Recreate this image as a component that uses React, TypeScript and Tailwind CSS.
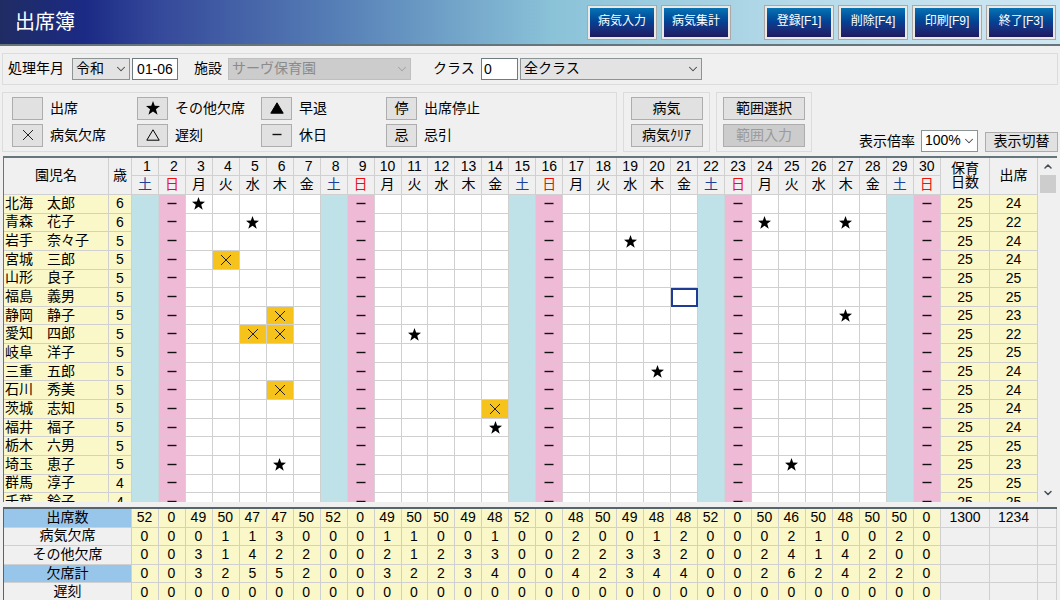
import type { ReactNode } from "react";
import { ChevronDown, ChevronUp } from "lucide-react";
import { clsx } from "clsx";

type Mark = "star" | "cross";

interface Child {
  name: string;
  age: number;
  attended: number;
  marks?: Record<number, Mark>;
}

const CHILDREN: Child[] = [
  { name: "北海　太郎", age: 6, attended: 24, marks: { 3: "star" } },
  { name: "青森　花子", age: 6, attended: 22, marks: { 5: "star", 24: "star", 27: "star" } },
  { name: "岩手　奈々子", age: 5, attended: 24, marks: { 19: "star" } },
  { name: "宮城　三郎", age: 5, attended: 24, marks: { 4: "cross" } },
  { name: "山形　良子", age: 5, attended: 25 },
  { name: "福島　義男", age: 5, attended: 25 },
  { name: "静岡　静子", age: 5, attended: 23, marks: { 6: "cross", 27: "star" } },
  { name: "愛知　四郎", age: 5, attended: 22, marks: { 5: "cross", 6: "cross", 11: "star" } },
  { name: "岐阜　洋子", age: 5, attended: 25 },
  { name: "三重　五郎", age: 5, attended: 24, marks: { 20: "star" } },
  { name: "石川　秀美", age: 5, attended: 24, marks: { 6: "cross" } },
  { name: "茨城　志知", age: 5, attended: 24, marks: { 14: "cross" } },
  { name: "福井　福子", age: 5, attended: 24, marks: { 14: "star" } },
  { name: "栃木　六男", age: 5, attended: 25 },
  { name: "埼玉　恵子", age: 5, attended: 23, marks: { 6: "star", 25: "star" } },
  { name: "群馬　淳子", age: 4, attended: 25 },
  { name: "千葉　鈴子", age: 4, attended: 25 },
];

const TOTALS = [
  {
    label: "出席数",
    strong: true,
    values: [52, 0, 49, 50, 47, 47, 50, 52, 0, 49, 50, 50, 49, 48, 52, 0, 48, 50, 49, 48, 48, 52, 0, 50, 46, 50, 48, 50, 50, 0],
    sums: ["1300", "1234"],
  },
  {
    label: "病気欠席",
    values: [0, 0, 0, 1, 1, 3, 0, 0, 0, 1, 1, 0, 0, 1, 0, 0, 2, 0, 0, 1, 2, 0, 0, 0, 2, 1, 0, 0, 2, 0],
  },
  {
    label: "その他欠席",
    values: [0, 0, 3, 1, 4, 2, 2, 0, 0, 2, 1, 2, 3, 3, 0, 0, 2, 2, 3, 3, 2, 0, 0, 2, 4, 1, 4, 2, 0, 0],
  },
  {
    label: "欠席計",
    strong: true,
    values: [0, 0, 3, 2, 5, 5, 2, 0, 0, 3, 2, 2, 3, 4, 0, 0, 4, 2, 3, 4, 4, 0, 0, 2, 6, 2, 4, 2, 2, 0],
  },
  { label: "遅刻", values: Array<number>(30).fill(0) },
];

const DAYS = Array.from({ length: 30 }, (_, i) => i + 1);
const WEEKDAYS = ["土", "日", "月", "火", "水", "木", "金"];
const SELECTED = { row: 5, day: 21 };

const weekday = (day: number) => WEEKDAYS[(day - 1) % 7];

const LINE = "border-r border-b border-[#d0d0d0]";
const CELL = `${LINE} p-0 pb-0.5 font-normal`;
const NUM = `${LINE} p-0 pb-px text-center font-normal`;

function Star({ className = "size-[13px]" }: { className?: string }) {
  return (
    <svg viewBox="0 0 12 12" className={clsx("mx-auto block", className)} aria-label="その他欠席">
      <path d="M6 0 7.5 4.1 12 4.3 8.5 7.1 9.9 11.8 6 9.1 2.1 11.8 3.5 7.1 0 4.3 4.5 4.1Z" fill="#000" />
    </svg>
  );
}

function Cross() {
  return (
    <svg viewBox="0 0 12 12" className="mx-auto block size-3" aria-label="病気欠席">
      <path d="M1 1 11 11M11 1 1 11" stroke="#222" strokeWidth="1" fill="none" />
    </svg>
  );
}

function Dash() {
  return (
    <svg viewBox="0 0 12 12" className="mx-auto block size-3" aria-label="休日">
      <path d="M1.5 5.5H10.5" stroke="#111" strokeWidth="1.4" fill="none" />
    </svg>
  );
}

function Triangle({ filled = false }: { filled?: boolean }) {
  return (
    <svg viewBox="0 0 14 12" className="mx-auto block h-3 w-3.5">
      <path d="M7 .8 13.2 11.2H.8Z" fill={filled ? "#000" : "none"} stroke="#000" strokeWidth="1" />
    </svg>
  );
}

const LEGEND: { label: string; icon: ReactNode }[] = [
  { label: "出席", icon: null },
  { label: "その他欠席", icon: <Star className="size-3.5" /> },
  { label: "早退", icon: <Triangle filled /> },
  { label: "出席停止", icon: "停" },
  { label: "病気欠席", icon: <Cross /> },
  { label: "遅刻", icon: <Triangle /> },
  { label: "休日", icon: <Dash /> },
  { label: "忌引", icon: "忌" },
];

function HeaderButton({ children }: { children: ReactNode }) {
  return (
    <button
      type="button"
      className="h-[35px] w-[70px] border border-[#a9a9a9] bg-[#ece9e4] p-[2px] text-[12px] text-white"
    >
      <span className="flex h-full items-center justify-center bg-linear-to-b from-[#0873b4] via-[#053f91] to-[#1c1a60] pb-0.5 whitespace-nowrap">
        {children}
      </span>
    </button>
  );
}

function GrayButton({ children, className, disabled }: { children: ReactNode; className?: string; disabled?: boolean }) {
  return (
    <button
      type="button"
      disabled={disabled}
      className={clsx(
        "flex items-center justify-center border border-[#adadad] pb-0.5 leading-none whitespace-nowrap",
        disabled ? "bg-[#cccccc] text-[#9b9b9b]" : "bg-[#e1e1e1]",
        className,
      )}
    >
      {children}
    </button>
  );
}

function Select({ label, value, className, disabled }: { label: string; value: string; className?: string; disabled?: boolean }) {
  return (
    <span className={clsx("grid h-[22px] items-center", className)}>
      <select
        aria-label={label}
        disabled={disabled}
        defaultValue={value}
        className={clsx(
          "col-start-1 row-start-1 h-full w-full appearance-none border pb-0.5 pl-[3px] leading-none",
          disabled ? "border-[#bfbfbf] text-[#8b8b8b]" : "border-[#8d9496]",
        )}
      >
        <option>{value}</option>
      </select>
      <ChevronDown
        strokeWidth={1.75}
        className={clsx(
          "pointer-events-none col-start-1 row-start-1 mr-0.5 size-3.5 justify-self-end",
          disabled ? "text-[#a5a5a5]" : "text-[#444]",
        )}
      />
    </span>
  );
}

function DayCell({ row, day, mark }: { row: number; day: number; mark?: Mark }) {
  const wd = weekday(day);
  return (
    <td
      className={clsx(
        "border-r border-b p-0",
        wd === "土" && "border-[#bee2e8] border-r-[#c8d8da] bg-[#bee2e8]",
        wd === "日" && "border-[#e6bfd4] border-r-[#d8d0d4] bg-[#efbad6]",
        wd !== "土" && wd !== "日" && "border-[#d0d0d0]",
        mark === "cross" && "bg-[#f5c31c]",
        row === SELECTED.row && day === SELECTED.day && "outline-2 -outline-offset-2 outline-[#1f3c94]",
      )}
    >
      {wd === "日" && <Dash />}
      {mark === "star" && <Star />}
      {mark === "cross" && <Cross />}
    </td>
  );
}

function AttendanceTable() {
  return (
    <table className="h-[354px] w-full table-fixed border-separate border-spacing-0 leading-none">
      <colgroup>
        <col className="w-[105px]" />
        <col className="w-[23px]" />
        {DAYS.map((d) => (
          <col key={d} />
        ))}
        <col className="w-[49px]" />
        <col className="w-[48px]" />
      </colgroup>
      <thead className="bg-[#f0f0f0]">
        <tr className="h-[18px]">
          <th rowSpan={2} className={CELL}>園児名</th>
          <th rowSpan={2} className={CELL}>歳</th>
          {DAYS.map((d) => (
            <th key={d} className={clsx(NUM, "h-[18px]", d < 10 && "pl-1")}>
              {d}
            </th>
          ))}
          <th rowSpan={2} className={CELL}>
            保育
            <br />
            日数
          </th>
          <th rowSpan={2} className={CELL}>出席</th>
        </tr>
        <tr className="h-[19px]">
          {DAYS.map((d) => (
            <th
              key={d}
              className={clsx(
                CELL,
                "h-[19px]",
                weekday(d) === "土" && "text-[#1d3f9c]",
                weekday(d) === "日" && "text-[#f01010]",
              )}
            >
              {weekday(d)}
            </th>
          ))}
        </tr>
      </thead>
      <tbody>
        {CHILDREN.map((child, row) => (
          <tr key={child.name}>
            <td className={clsx(CELL, "bg-[#faf7c8] pl-px whitespace-nowrap")}>{child.name}</td>
            <td className={clsx(NUM, "bg-[#faf7c8]")}>{child.age}</td>
            {DAYS.map((d) => (
              <DayCell key={d} row={row} day={d} mark={child.marks?.[d]} />
            ))}
            <td className={clsx(NUM, "bg-[#faf7c8]")}>25</td>
            <td className={clsx(NUM, "bg-[#faf7c8]")}>{child.attended}</td>
          </tr>
        ))}
      </tbody>
    </table>
  );
}

function TotalsTable() {
  return (
    <table className="h-[93px] w-full table-fixed border-separate border-spacing-0 bg-[#f0f0f0] leading-none">
      <colgroup>
        <col className="w-[128px]" />
        {DAYS.map((d) => (
          <col key={d} />
        ))}
        <col className="w-[49px]" />
        <col className="w-[48px]" />
        <col className="w-[19px]" />
      </colgroup>
      <tbody>
        {TOTALS.map((row) => (
          <tr key={row.label}>
            <th className={clsx(CELL, row.strong && "bg-[#98c5ea]")}>{row.label}</th>
            {row.values.map((v, i) => (
              <td key={i} className={clsx(NUM, "bg-[#faf7c8] pr-px")}>
                {v}
              </td>
            ))}
            <td className={NUM}>{row.sums?.[0]}</td>
            <td className={NUM}>{row.sums?.[1]}</td>
            <td className={CELL} />
          </tr>
        ))}
      </tbody>
    </table>
  );
}

export default function App() {
  return (
    <div className="flex h-screen flex-col overflow-hidden bg-[#f0f0f0] font-['Liberation_Sans','Noto_Sans_CJK_JP',sans-serif] text-[14px] text-black">
      {/* Title bar */}
      <header className="flex h-[46px] shrink-0 items-center justify-between border-b-2 border-[#66757c] bg-[linear-gradient(to_right,#1f2c63,#1b2a85_8%,#35499a_15%,#5b86ba_34%,#8ac2d8_52%,#b5dae9_75%,#d0e8f4)] pr-1 pl-[15px]">
        <h1 className="text-[20px] text-white">出席簿</h1>
        <div className="flex gap-1">
          <HeaderButton>病気入力</HeaderButton>
          <HeaderButton>病気集計</HeaderButton>
          <div className="w-[25px]" />
          <HeaderButton>登録[F1]</HeaderButton>
          <HeaderButton>削除[F4]</HeaderButton>
          <HeaderButton>印刷[F9]</HeaderButton>
          <HeaderButton>終了[F3]</HeaderButton>
        </div>
      </header>

      {/* Filters */}
      <div className="mx-0.5 mt-[7px] flex h-8 shrink-0 items-center border border-[#dcdcdc] pl-[5px]">
        <span className="w-16 pb-0.5">処理年月</span>
        <Select label="元号" value="令和" className="w-[58px] bg-[#e3e3e3]" />
        <input
          aria-label="処理年月"
          defaultValue="01-06"
          className="ml-0.5 h-[22px] w-[46px] border border-[#6e7b80] bg-white text-center"
        />
        <span className="ml-4 w-[34px] pb-0.5">施設</span>
        <Select label="施設" value="サーヴ保育園" className="w-[183px] bg-[#cccccc]" disabled />
        <label htmlFor="class-no" className="ml-[22px] w-12 pb-0.5">クラス</label>
        <input
          id="class-no"
          defaultValue="0"
          className="h-[22px] w-[37px] border border-[#6e7b80] bg-white pl-0.5"
        />
        <Select label="クラス" value="全クラス" className="ml-0.5 w-[182px] bg-[#e3e3e3]" />
      </div>

      {/* Legend and tools */}
      <div className="mx-0.5 mt-[7px] flex h-[60px] shrink-0 items-stretch">
        <div className="grid w-[615px] grid-cols-[125px_124px_125px_auto] content-center gap-y-1 border border-[#dcdcdc] pl-[9px]">
          {LEGEND.map((item) => (
            <div key={item.label} className="flex h-[23px] items-center gap-[7px]">
              <button
                type="button"
                aria-label={item.label}
                className="h-[23px] w-[31px] border border-[#adadad] bg-[#e1e1e1] pb-0.5 leading-none"
              >
                {item.icon}
              </button>
              <span>{item.label}</span>
            </div>
          ))}
        </div>
        <div className="ml-1.5 flex w-[87px] flex-col items-center justify-center gap-1 border border-[#dcdcdc]">
          <GrayButton className="h-[23px] w-[72px]">病気</GrayButton>
          <GrayButton className="h-[23px] w-[72px]">病気ｸﾘｱ</GrayButton>
        </div>
        <div className="ml-1.5 flex w-[96px] flex-col items-center justify-center gap-1 border border-[#dcdcdc]">
          <GrayButton className="h-[23px] w-[82px]">範囲選択</GrayButton>
          <GrayButton className="h-[23px] w-[82px]" disabled>範囲入力</GrayButton>
        </div>
        <div className="ml-auto flex items-end">
          <span className="mr-1.5">表示倍率</span>
          <Select label="表示倍率" value="100%" className="w-[57px] bg-white" />
          <GrayButton className="ml-[7px] h-5 w-[73px]">表示切替</GrayButton>
        </div>
      </div>

      {/* Attendance grid */}
      <div className="mx-[3px] mt-1 flex min-h-0 flex-1 overflow-hidden border-t-2 border-l border-[#66757c] bg-white">
        <div className="min-w-0 flex-1 overflow-hidden">
          <AttendanceTable />
        </div>
        <div className="flex w-[19px] flex-col items-center bg-[#f0f0f0]">
          <ChevronUp strokeWidth={3} className="h-[17px] w-3 text-[#444f55]" />
          <div className="h-[18px] w-4 bg-[#cdcdcd]" />
          <ChevronDown strokeWidth={3} className="mt-auto h-[18px] w-3 text-[#444f55]" />
        </div>
      </div>

      {/* Daily totals */}
      <div className="mx-[3px] mt-[5px] h-[93px] shrink-0 overflow-hidden border-t-2 border-l border-[#56656c]">
        <TotalsTable />
      </div>
    </div>
  );
}
